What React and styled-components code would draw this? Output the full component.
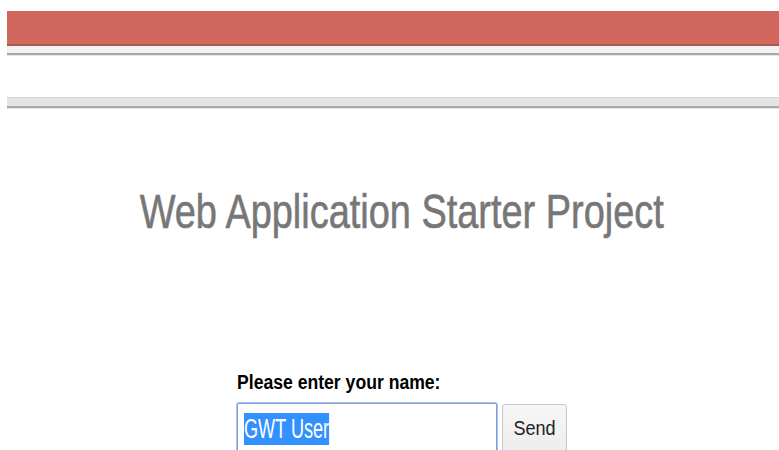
import React from "react";
import styled, { createGlobalStyle } from "styled-components";

const GlobalStyle = createGlobalStyle`
  html, body {
    margin: 0;
    padding: 0;
    background: #fff;
    overflow: hidden;
  }
  body {
    font-family: "Liberation Sans", Arial, sans-serif;
  }
`;

const Page = styled.div`
  width: 779px;
  height: 450px;
  overflow: hidden;
`;

const Chrome = styled.div`
  padding: 11px 0 0 7px;
`;

const Banner = styled.div`
  height: 33px;
  background: #d0685f;
  border-bottom: 2px solid #a65a52;
`;

const Strip = styled.div`
  height: ${props => props.h}px;
  margin-top: ${props => props.gap || 0}px;
  background: ${props => props.bg};
  border-top: ${props => (props.top ? `1px solid ${props.top}` : "none")};
  border-bottom: 2px solid #a8a8a8;
  box-shadow: 0 1px 0 #e6e6e6;
`;

const Heading = styled.h1`
  margin: 80px 0 0;
  padding-left: 25px;
  text-align: center;
  font-size: 48px;
  line-height: 48px;
  font-weight: normal;
  color: #777;
  -webkit-text-stroke: 0.6px #777;
`;

const Squeeze = styled.span`
  display: inline-block;
  white-space: nowrap;
  transform: scaleX(${props => props.x});
  transform-origin: ${props => props.origin || "left"} center;
`;

const Form = styled.div`
  margin: 136px 0 0 237px;
  display: flex;
  flex-direction: column;
`;

const Label = styled.div`
  font-size: 20px;
  line-height: 20px;
  font-weight: bold;
  color: #000;
  height: 20px;
`;

const Row = styled.div`
  margin-top: 11px;
  display: flex;
  align-items: flex-start;
  gap: 5px;
`;

const Field = styled.div`
  box-sizing: border-box;
  width: 260px;
  height: 56px;
  border: 1px solid #7b9fd6;
  box-shadow: 0 0 0 1px #a9c4ec;
  border-radius: 2px;
  padding: 9px 0 0 6px;
  background: #fff;
`;

const Selected = styled.span`
  display: inline-block;
  white-space: nowrap;
  background: #3390ff;
  color: #fff;
  font-size: 27px;
  line-height: 32px;
  height: 32px;
`;

const Button = styled.button`
  box-sizing: border-box;
  width: 65px;
  height: 56px;
  margin-top: 1px;
  border: 1px solid #c6c6c6;
  border-radius: 3px;
  background: linear-gradient(#f6f6f6, #ececec);
  font-family: "Liberation Sans", Arial, sans-serif;
  font-size: 21px;
  color: #222;
  padding: 0 0 8px;
  display: flex;
  align-items: center;
  justify-content: center;
`;

export default function App() {
  return (
    <Page>
      <GlobalStyle />
      <Chrome>
        <Banner />
        <Strip h={7} bg="#f3f3f3" />
        <Strip h={8} bg="#e4e4e4" top="#d6d6d6" gap={42} />
      </Chrome>
      <Heading>
        <Squeeze x={0.79} origin="center">Web Application Starter Project</Squeeze>
      </Heading>
      <Form>
        <Label>
          <Squeeze x={0.88}>Please enter your name:</Squeeze>
        </Label>
        <Row>
          <Field>
            <Squeeze x={0.67}>
              <Selected>GWT User</Selected>
            </Squeeze>
          </Field>
          <Button>
            <Squeeze x={0.86} origin="center">Send</Squeeze>
          </Button>
        </Row>
      </Form>
    </Page>
  );
}
